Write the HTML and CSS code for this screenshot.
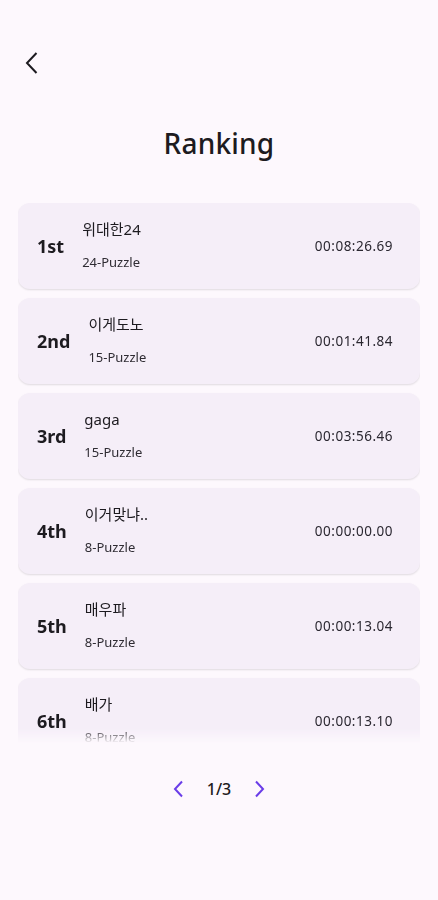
FILE: index.html
```html
<!DOCTYPE html>
<html lang="ko">

<head>
    <meta charset="UTF-8">
    <meta name="viewport" content="width=device-width, initial-scale=1.0">
    <title>Ranking</title>
    <link rel="stylesheet" href="styles.css">
</head>

<body>
    <div class="page">
        <div class="topbar">
            <button class="back" aria-label="back">
                <svg width="24" height="24" viewBox="0 0 24 24" fill="none" stroke="#1d1b20" stroke-width="2">
                    <path d="M16.5 2 L7 12 L16.5 22" />
                </svg>
            </button>
        </div>

        <h1 class="title">Ranking</h1>

        <div class="list">
            <div class="card">
                <div class="rank">1st</div>
                <div class="info">
                    <div class="name">위대한24</div>
                    <div class="puzzle">24-Puzzle</div>
                </div>
                <div class="time">00:08:26.69</div>
            </div>
            <div class="card">
                <div class="rank">2nd</div>
                <div class="info">
                    <div class="name">이게도노</div>
                    <div class="puzzle">15-Puzzle</div>
                </div>
                <div class="time">00:01:41.84</div>
            </div>
            <div class="card">
                <div class="rank">3rd</div>
                <div class="info">
                    <div class="name">gaga</div>
                    <div class="puzzle">15-Puzzle</div>
                </div>
                <div class="time">00:03:56.46</div>
            </div>
            <div class="card">
                <div class="rank">4th</div>
                <div class="info">
                    <div class="name">이거맞냐..</div>
                    <div class="puzzle">8-Puzzle</div>
                </div>
                <div class="time">00:00:00.00</div>
            </div>
            <div class="card">
                <div class="rank">5th</div>
                <div class="info">
                    <div class="name">매우파</div>
                    <div class="puzzle">8-Puzzle</div>
                </div>
                <div class="time">00:00:13.04</div>
            </div>
            <div class="card">
                <div class="rank">6th</div>
                <div class="info">
                    <div class="name">배가</div>
                    <div class="puzzle">8-Puzzle</div>
                </div>
                <div class="time">00:00:13.10</div>
            </div>
        </div>

        <div class="pager">
            <button class="arrow" aria-label="previous">
                <svg width="20" height="20" viewBox="0 0 20 20" fill="none" stroke="#6a3de8" stroke-width="2">
                    <path d="M13 2.5 L6 10 L13 17.5" />
                </svg>
            </button>
            <span class="count">1/3</span>
            <button class="arrow" aria-label="next">
                <svg width="20" height="20" viewBox="0 0 20 20" fill="none" stroke="#6a3de8" stroke-width="2">
                    <path d="M7 2.5 L14 10 L7 17.5" />
                </svg>
            </button>
        </div>
    </div>
</body>

</html>
```

FILE: styles.css
```css
body {
    margin: 0;
    background: #fdf8fd;
    font-family: "Noto Sans", "Noto Sans CJK KR", sans-serif;
    color: #1d1b20;
}

.page {
    width: 438px;
    height: 900px;
    display: flex;
    flex-direction: column;
}

.topbar {
    height: 24px;
    padding: 51px 0 0 20px;
}

.back {
    width: 24px;
    height: 24px;
    padding: 0;
    border: none;
    background: none;
    display: flex;
}

.title {
    margin: 0;
    padding-top: 48px;
    height: 40px;
    line-height: 40px;
    text-align: center;
    font-size: 28px;
    font-weight: 500;
    letter-spacing: 0.2px;
}

.list {
    margin: 40px 18px 0;
    height: 540px;
    display: flex;
    flex-direction: column;
    gap: 9px;
    overflow: hidden;
    -webkit-mask-image: linear-gradient(to bottom, #000 calc(100% - 14px), transparent);
    mask-image: linear-gradient(to bottom, #000 calc(100% - 14px), transparent);
}

.card {
    flex: none;
    height: 86px;
    display: flex;
    align-items: center;
    padding: 0 27px 0 19px;
    background: #f5eef8;
    border-radius: 12px;
    box-shadow: 0 1px 2px rgba(0, 0, 0, 0.12);
}

.rank {
    font-size: 18px;
    font-weight: 700;
    margin-right: 18px;
}

.info {
    flex: 1;
    display: flex;
    flex-direction: column;
    gap: 14px;
    margin-top: -3px;
}

.name {
    font-size: 15px;
    line-height: 20px;
}

.puzzle {
    font-size: 13px;
    line-height: 18px;
    color: #2f2c33;
}

.time {
    font-size: 13.5px;
    letter-spacing: 0.5px;
    color: #2a2730;
}

.pager {
    margin-top: 35px;
    display: flex;
    justify-content: center;
    align-items: center;
    gap: 18px;
}

.arrow {
    width: 20px;
    height: 20px;
    padding: 0;
    border: none;
    background: none;
    display: flex;
}

.count {
    font-size: 16px;
    font-weight: 500;
}
```
